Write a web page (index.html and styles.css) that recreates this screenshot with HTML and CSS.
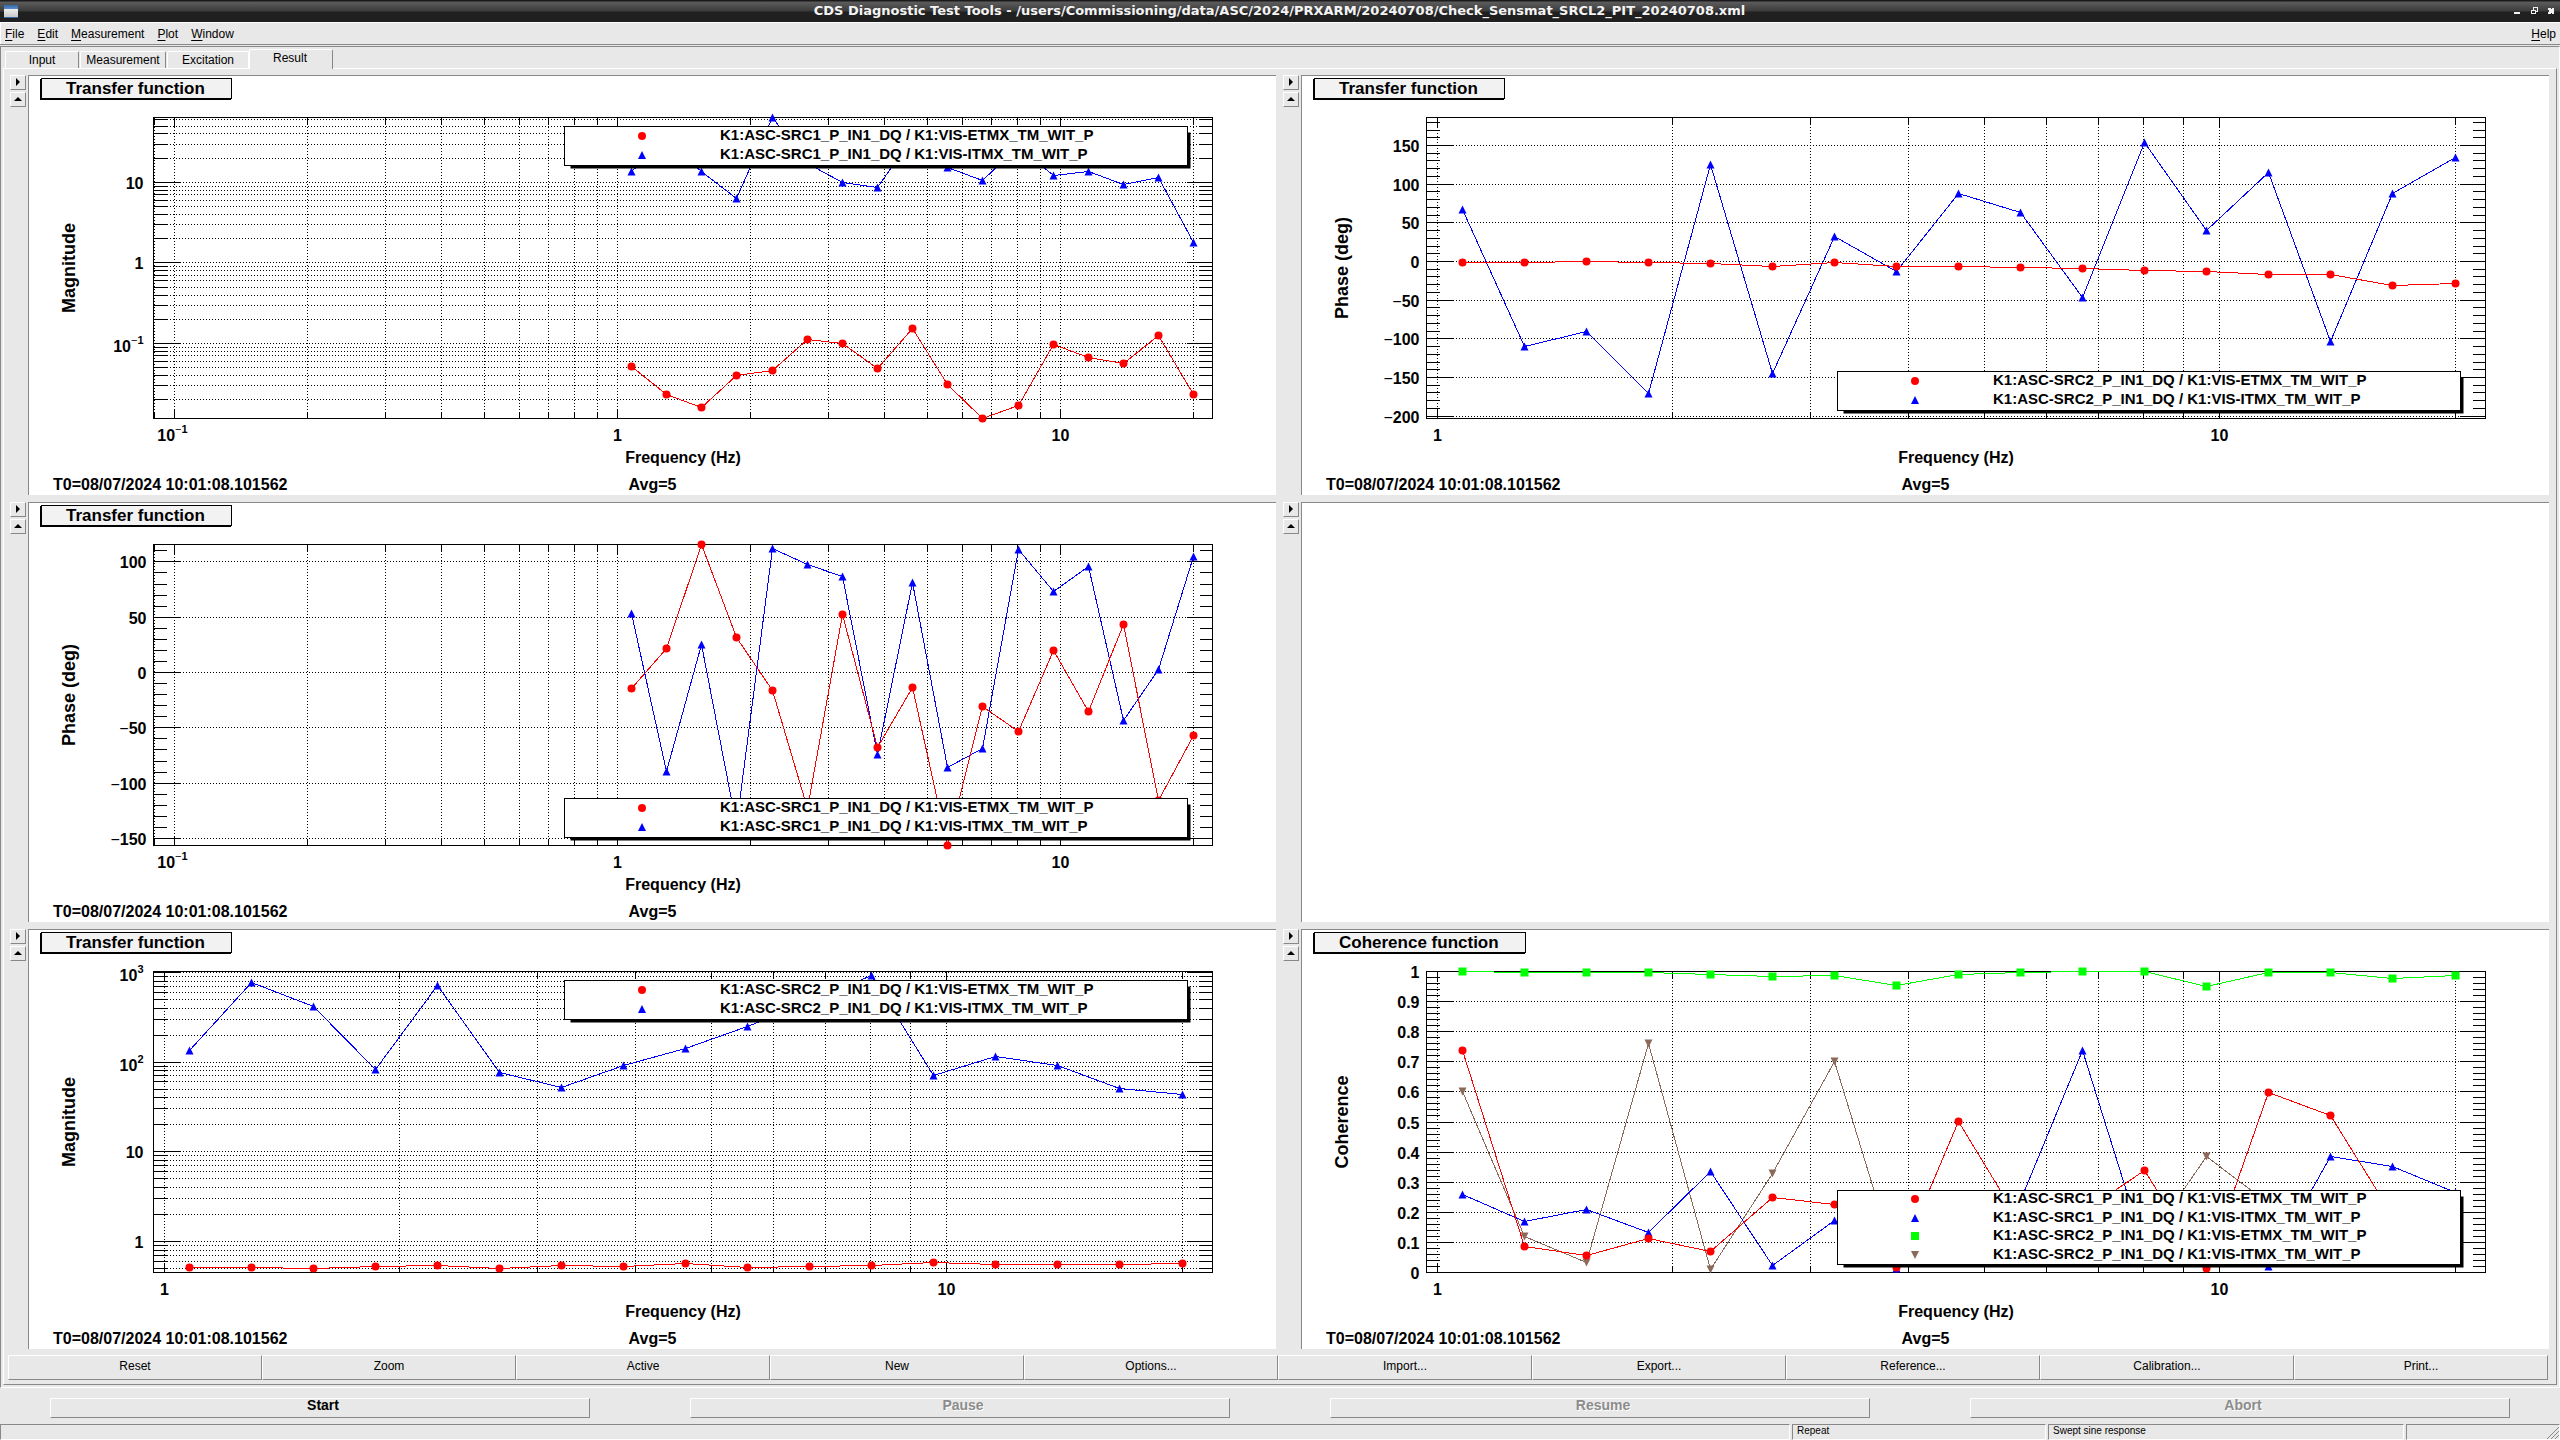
FILE: index.html
```
<!DOCTYPE html>
<html lang="en">
<head>
    <meta charset="UTF-8">
    <meta name="viewport" content="width=device-width, initial-scale=1.0">
    <title>CDS Diagnostic Test Tools</title>
    <link rel="stylesheet" href="styles.css">
</head>
<body>
    <header class="titlebar">
        <span class="app-icon"></span>
        <h1>CDS Diagnostic Test Tools - /users/Commissioning/data/ASC/2024/PRXARM/20240708/Check_Sensmat_SRCL2_PIT_20240708.xml</h1>
        <div class="window-buttons">
            <button type="button" aria-label="Minimize"><svg width="7" height="8"><rect x="0" y="5" width="6" height="2"/></svg></button>
            <button type="button" aria-label="Restore"><svg width="7" height="8"><path d="M2 0h5v5H5v2H0V3h2zM3 1v2h2v1h1V1zM1 4v2h3V4z" fill-rule="evenodd"/></svg></button>
            <button type="button" aria-label="Close"><svg width="7" height="8"><path d="M0 1h2l1 1 1-1h2v2L5 4l1 1v2H4L3 6 2 7H0V5l1-1-1-1z"/></svg></button>
        </div>
    </header>

    <nav class="menubar">
        <button type="button"><u>F</u>ile</button>
        <button type="button"><u>E</u>dit</button>
        <button type="button"><u>M</u>easurement</button>
        <button type="button"><u>P</u>lot</button>
        <button type="button"><u>W</u>indow</button>
        <button type="button" class="help"><u>H</u>elp</button>
    </nav>

    <main class="workspace">
        <div class="tabs" role="tablist">
            <button type="button" role="tab" class="tab tab-input">Input</button>
            <button type="button" role="tab" class="tab tab-measurement">Measurement</button>
            <button type="button" role="tab" class="tab tab-excitation">Excitation</button>
            <button type="button" role="tab" class="tab tab-result active" aria-selected="true">Result</button>
        </div>

        <section class="panel">
            <div class="plots" id="plots"></div>
            <div class="plot-actions">
                <button type="button">Reset</button>
                <button type="button">Zoom</button>
                <button type="button">Active</button>
                <button type="button">New</button>
                <button type="button">Options...</button>
                <button type="button">Import...</button>
                <button type="button">Export...</button>
                <button type="button">Reference...</button>
                <button type="button">Calibration...</button>
                <button type="button">Print...</button>
            </div>
        </section>
    </main>

    <div class="controls">
        <button type="button">Start</button>
        <button type="button" disabled>Pause</button>
        <button type="button" disabled>Resume</button>
        <button type="button" disabled>Abort</button>
    </div>

    <footer class="statusbar">
        <span></span>
        <span>Repeat</span>
        <span>Swept sine response</span>
        <span class="grip"><svg width="12" height="12"><path d="M0 12L12 0M4 12l8-8M8 12l4-4" stroke="#888" fill="none"/></svg></span>
    </footer>

    <script src="plots.js"></script>
</body>
</html>
```

FILE: styles.css
```
* {
    box-sizing: border-box;
}
body {
    margin: 0;
    height: 100vh;
    display: flex;
    flex-direction: column;
    overflow: hidden;
    background: #e8e8e8;
    color: #000;
    font: 12px/16px "Liberation Sans", Arial, sans-serif;
}
button {
    font: inherit;
    color: inherit;
    background: #e8e8e8;
    border: 0;
    padding: 0;
}

/* Title bar */
.titlebar {
    height: 22px;
    display: grid;
    grid-template-columns: 1fr auto 1fr;
    align-items: center;
    padding: 0 5px 0 4px;
    background: linear-gradient(#1c1a1c 0, #1c1a1c 1px, #5c5c5c 2px, #3c3c3c 11px, #202020 12px, #202020 100%);
    color: #f4f4f4;
}
.titlebar h1 {
    margin: 0;
    font: bold 13px/18px "DejaVu Sans", sans-serif;
}
.app-icon {
    width: 14px;
    height: 13px;
    background: linear-gradient(#3568a8, #5c8cc8 4px, #eee 4px, #c8c8c8);
    border-bottom: 1px solid #3a66a0;
}
.window-buttons {
    display: flex;
    justify-content: flex-end;
    gap: 10px;
}
.window-buttons button {
    background: none;
    height: 8px;
}
.window-buttons svg {
    display: block;
    fill: #f0f0f0;
    shape-rendering: crispEdges;
}

/* Menu */
.menubar {
    height: 23px;
    display: flex;
    gap: 13px;
    padding: 0 4px 0 5px;
    border-top: 1px solid #fff;
    border-bottom: 1px solid #888;
    box-shadow: inset 1px 0 #fff;
}
.menubar .help {
    margin-left: auto;
}
.menubar u {
    text-underline-offset: 2px;
}

/* Tabs and result panel */
.workspace {
    flex: 1;
    min-height: 0;
    display: flex;
    flex-direction: column;
    margin-top: 1px;
    padding: 1px 2px 2px;
    border: 1px solid #fff;
    border-top-color: #888;
    border-left-color: #888;
}
.tabs {
    display: flex;
    align-items: flex-end;
    height: 20px;
    padding-left: 2px;
}
.tab {
    height: 17px;
    line-height: 14px;
    border: 1px solid #fff;
    border-right-color: #888;
    border-bottom: 0;
    border-radius: 2px 2px 0 0;
}
.tab-input {
    width: 74px;
    margin-right: 1px;
}
.tab-measurement {
    width: 86px;
    margin-right: 1px;
}
.tab-excitation {
    width: 82px;
    border-right-color: #fff;
}
.tab-result {
    width: 84px;
}
.tab.active {
    position: relative;
    height: 20px;
    margin-bottom: -1px;
    padding: 0 2px 4px 0;
}
.panel {
    flex: 1;
    min-height: 0;
    display: flex;
    flex-direction: column;
    gap: 6px;
    padding: 6px 7px 4px 4px;
    border: 1px solid #fff;
    border-right-color: #888;
    border-bottom-color: #888;
}
.plots {
    flex: 1;
    min-height: 0;
    margin-left: 2px;
    display: grid;
    grid-template-columns: 1fr 1fr;
    grid-template-rows: repeat(3, 1fr);
    gap: 7px;
}
.cell {
    display: grid;
    grid-template-columns: 16px 1fr;
    gap: 2px;
    min-width: 0;
    min-height: 0;
}
.gutter {
    display: flex;
    flex-direction: column;
    gap: 2px;
}
.gutter button {
    height: 15px;
    padding-bottom: 1px;
    border: 1px solid #fff;
    border-right-color: #888;
    border-bottom-color: #888;
}
.gutter svg {
    display: block;
    margin: auto;
}

/* Plot pad */
.pad {
    display: flex;
    flex-direction: column;
    min-width: 0;
    min-height: 0;
    background: #fff;
    border: 1px solid #888;
    border-right: 0;
    border-bottom: 0;
}
.pad h2 {
    align-self: flex-start;
    margin: 2px 0 1px 12px;
    padding: 0 26px 0 24px;
    font-size: 17px;
    line-height: 19px;
    background: #f2f2f2;
    border: 1px solid #000;
    box-shadow: -1px 1px #000;
}
.chart {
    flex: 1;
    min-height: 0;
    width: 100%;
    display: block;
    overflow: visible;
    font-size: 16px;
    font-weight: bold;
}
.chart .axis, .chart .grid, .chart .line {
    fill: none;
    stroke: #000;
    shape-rendering: crispEdges;
}
.chart .grid {
    stroke-dasharray: 1 2;
}
.chart .y-title {
    font-size: 18px;
}
.chart .exponent {
    font-size: 11px;
}
.chart .minus {
    font-weight: normal;
}
.chart .legend-text {
    font-size: 15px;
}
.chart .legend-box {
    fill: #fff;
    stroke: #000;
}
.pad-info {
    display: grid;
    grid-template-columns: 1fr auto 1fr;
    padding: 6px 24px 1px;
    font-size: 16px;
    line-height: 18px;
    font-weight: bold;
}

/* Buttons below the plots */
.plot-actions {
    display: grid;
    grid-template-columns: repeat(10, 1fr);
    height: 25px;
    margin-right: 1px;
}
.plot-actions button {
    padding-bottom: 4px;
    border: 1px solid #fff;
    border-right-color: #888;
    border-bottom-color: #888;
}
.controls {
    display: grid;
    grid-template-columns: repeat(4, 1fr);
    gap: 100px;
    padding: 10px 50px 6px;
}
.controls button {
    height: 20px;
    padding: 0 0 6px 6px;
    font-size: 14px;
    line-height: 12px;
    font-weight: bold;
    border: 1px solid #fff;
    border-right-color: #888;
    border-bottom-color: #888;
}
.controls button:disabled {
    color: #8c8c8c;
    text-shadow: 1px 1px #fff;
}

/* Status bar */
.statusbar {
    display: grid;
    grid-template-columns: 70% 10% 14% 6%;
    height: 16px;
    font-size: 10px;
    line-height: 12px;
}
.statusbar span {
    margin-right: 2px;
    padding-left: 4px;
    border: 1px solid #888;
    border-right-color: #fff;
    border-bottom-color: #fff;
}
.statusbar .grip {
    display: flex;
    justify-content: flex-end;
    align-items: flex-end;
    margin-right: 0;
}
```

FILE: plots.js
```
const RED = '#ff0000';
const BLUE = '#0000ff';
const GREEN = '#00ff00';
const BROWN = '#8c6a5a';

// 17 swept sine points, log spaced up to 20 Hz
const FREQ_START = Math.log10(1.0758);
const FREQ_STEP = (Math.log10(20) - FREQ_START) / 16;

const WIDE = [-1.047, 1.343];
const NARROW = [-0.014, 1.34];

const plots = [
    {
        title: 'Transfer function', yTitle: 'Magnitude', x: WIDE, y: [-1.932, 1.807], log: true, legend: 'top',
        series: [
            { name: 'K1:ASC-SRC1_P_IN1_DQ / K1:VIS-ETMX_TM_WIT_P', color: RED, marker: 'circle',
              data: [0.0518, 0.0232, 0.016, 0.04, 0.0462, 0.112, 0.1, 0.0489, 0.1536, 0.0307, 0.0117, 0.017, 0.0972, 0.067, 0.0564, 0.1257, 0.0232] },
            { name: 'K1:ASC-SRC1_P_IN1_DQ / K1:VIS-ITMX_TM_WIT_P', color: BLUE, marker: 'up',
              data: [13.57, 33.6, 13.57, 6.39, 64.2, 17.2, 9.9, 8.59, 36.2, 15.2, 10.49, 27.7, 12.2, 13.57, 9.44, 11.43, 1.815] }
        ]
    },
    {
        title: 'Transfer function', yTitle: 'Phase (deg)', x: NARROW, y: [-203, 186.2], step: 50, minor: 10, legend: 'bottom',
        series: [
            { name: 'K1:ASC-SRC2_P_IN1_DQ / K1:VIS-ETMX_TM_WIT_P', color: RED, marker: 'circle',
              data: [-1, -1, 0.3, -1, -2.5, -6.5, -1, -6.5, -6.5, -7.8, -9, -11.6, -13, -16.8, -16.8, -31, -28.4] },
            { name: 'K1:ASC-SRC2_P_IN1_DQ / K1:VIS-ITMX_TM_WIT_P', color: BLUE, marker: 'up',
              data: [67, -110, -91, -171, 125, -145, 32.5, -13, 88, 63.4, -46.5, 153.4, 40, 114.7, -103.7, 88, 134.5] }
        ]
    },
    {
        title: 'Transfer function', yTitle: 'Phase (deg)', x: WIDE, y: [-156.3, 115.7], step: 50, minor: 10, legend: 'bottom',
        series: [
            { name: 'K1:ASC-SRC1_P_IN1_DQ / K1:VIS-ETMX_TM_WIT_P', color: RED, marker: 'circle',
              data: [-14.5, 21.7, 115.7, 31.6, -16.3, -123, 52.4, -67.8, -13.6, -156.3, -30.7, -53.3, 19.9, -35.2, 43.4, -116, -57] },
            { name: 'K1:ASC-SRC1_P_IN1_DQ / K1:VIS-ITMX_TM_WIT_P', color: BLUE, marker: 'up',
              data: [53, -89, 25, -138, 111.7, 97.3, 86.4, -73.8, 81, -85.5, -68.4, 111.1, 72.9, 96, -43, 2.4, 104.5] }
        ]
    },
    null,
    {
        title: 'Transfer function', yTitle: 'Magnitude', x: NARROW, y: [-0.346, 3.01], log: true, legend: 'top',
        series: [
            { name: 'K1:ASC-SRC2_P_IN1_DQ / K1:VIS-ETMX_TM_WIT_P', color: RED, marker: 'circle',
              data: [0.513, 0.513, 0.5, 0.526, 0.54, 0.5, 0.54, 0.522, 0.568, 0.513, 0.526, 0.54, 0.583, 0.554, 0.554, 0.554, 0.568] },
            { name: 'K1:ASC-SRC2_P_IN1_DQ / K1:VIS-ITMX_TM_WIT_P', color: BLUE, marker: 'up',
              data: [134.9, 773, 418, 82.8, 716, 76.7, 52.1, 91.8, 142, 250, 475, 926, 71, 115.6, 91.8, 50.4, 43.6] }
        ]
    },
    {
        title: 'Coherence function', yTitle: 'Coherence', x: NARROW, y: [0, 1], step: 0.1, minor: 0.02, legend: 'bottom',
        series: [
            { name: 'K1:ASC-SRC1_P_IN1_DQ / K1:VIS-ETMX_TM_WIT_P', color: RED, marker: 'circle',
              data: [0.7375, 0.0853, 0.0565, 0.113, 0.07, 0.249, 0.226, 0.016, 0.503, 0.163, 0.2, 0.339, 0.013, 0.598, 0.5216, 0.19, 0.15] },
            { name: 'K1:ASC-SRC1_P_IN1_DQ / K1:VIS-ITMX_TM_WIT_P', color: BLUE, marker: 'up',
              data: [0.26, 0.168, 0.208, 0.132, 0.334, 0.024, 0.172, 0.012, 0.1, 0.24, 0.7365, 0.08, 0.12, 0.021, 0.3865, 0.351, 0.265] },
            { name: 'K1:ASC-SRC2_P_IN1_DQ / K1:VIS-ETMX_TM_WIT_P', color: GREEN, marker: 'square',
              data: [1, 0.998, 0.998, 0.998, 0.991, 0.984, 0.988, 0.955, 0.991, 0.998, 1, 1, 0.951, 0.998, 0.998, 0.978, 0.988] },
            { name: 'K1:ASC-SRC2_P_IN1_DQ / K1:VIS-ITMX_TM_WIT_P', color: BROWN, marker: 'down',
              data: [0.601, 0.12, 0.033, 0.761, 0.01, 0.329, 0.7, 0.03, 0.1, 0.15, 0.12, 0.085, 0.3865, 0.23, 0.15, 0.1, 0.2] }
        ]
    }
];

function marker(type, x, y, color) {
    if (type === 'circle') return `<circle cx="${x}" cy="${y}" r="4" fill="${color}"/>`;
    if (type === 'square') return `<rect x="${x - 4}" y="${y - 4}" width="8" height="8" fill="${color}"/>`;
    if (type === 'up') return `<path d="M${x - 4} ${y + 4}h8l-4-8z" fill="${color}"/>`;
    return `<path d="M${x - 4} ${y - 4}h8l-4 8z" fill="${color}"/>`;
}

function number(value) {
    return value < 0 ? `<tspan class="minus">−</tspan>${-value}` : String(value);
}

// 1 and 10 are written out, other decades as powers of ten
function decade(n) {
    if (n === 0 || n === 1) return String(10 ** n);
    return `10<tspan class="exponent" dy="-8">${number(n)}</tspan>`;
}

// Major and minor tick positions of a log axis
function logTicks(range) {
    const ticks = [];
    for (let n = Math.floor(range[0]); n <= range[1]; n++) {
        for (let m = 1; m < 10; m++) {
            const at = n + Math.log10(m);
            if (at >= range[0] && at <= range[1]) {
                ticks.push({ at, major: m === 1, label: m === 1 ? decade(n) : '', power: m === 1 && (n < 0 || n > 1) });
            }
        }
    }
    return ticks;
}

function linearTicks(plot) {
    const ticks = [];
    const ratio = Math.round(plot.step / plot.minor);
    for (let i = Math.ceil(plot.y[0] / plot.minor); i <= Math.round(plot.y[1] / plot.minor * 100) / 100; i++) {
        const major = i % ratio === 0;
        ticks.push({ at: i * plot.minor, major, label: major ? number(Math.round(i * plot.minor * 100) / 100) : '' });
    }
    return ticks;
}

function draw(svg, plot) {
    const width = svg.clientWidth;
    const height = svg.clientHeight;
    const left = Math.round(width * 0.1) - 0.5;
    const right = Math.floor(width * 0.95) - 0.5;
    const top = 17.5;
    const bottom = height - 51.5;
    const px = v => left + (v - plot.x[0]) / (plot.x[1] - plot.x[0]) * (right - left);
    const py = v => bottom - (v - plot.y[0]) / (plot.y[1] - plot.y[0]) * (bottom - top);
    const snap = v => Math.floor(v) + 0.5;

    let grid = '';
    let axis = `M${left} ${top}H${right}V${bottom}H${left}Z`;
    let labels = '';

    // Grid lines start on a whole pixel so that every dot is solid
    logTicks(plot.x).forEach(t => {
        const x = snap(px(t.at));
        const size = t.major ? 10 : 6;
        grid += `M${x} ${top + 0.5}V${bottom}`;
        axis += `M${x} ${top}v${size}M${x} ${bottom}v${-size}`;
        if (t.label) labels += `<text x="${t.power ? x - 2 : x}" y="${bottom + 22}" text-anchor="middle">${t.label}</text>`;
    });

    (plot.log ? logTicks(plot.y) : linearTicks(plot)).forEach(t => {
        const y = snap(py(t.at));
        const size = t.major ? 26 : 13;
        if (t.major || plot.log) grid += `M${left + size + 0.5} ${y}H${right - size}`;
        axis += `M${left} ${y}h${size}M${right} ${y}h${-size}`;
        if (t.label) labels += `<text x="${left - (plot.log ? 10 : 7)}" y="${y + (t.power ? 8 : 6)}" text-anchor="end">${t.label}</text>`;
    });

    // First series ends up on top
    let curves = '';
    [...plot.series].reverse().forEach(s => {
        const points = s.data.map((v, i) => [
            snap(px(FREQ_START + i * FREQ_STEP)),
            snap(py(plot.log ? Math.log10(v) : v))
        ]);
        curves += `<polyline class="line" style="stroke:${s.color}" points="${points.join(' ')}"/>`;
        curves += points.map(p => marker(s.marker, p[0], p[1], s.color)).join('');
    });

    const boxWidth = Math.floor(width * 0.5);
    const boxHeight = plot.series.length > 2 ? 74 : 39;
    const boxX = Math.round(width * 0.43) - 0.5;
    const boxY = plot.legend === 'top' ? top + 9 : bottom - 8 - boxHeight;
    const row = boxHeight / plot.series.length;
    let legend = `<rect x="${boxX + 6}" y="${boxY + 6}" width="${boxWidth - 3}" height="${boxHeight - 3}"/>`;
    legend += `<rect class="legend-box" x="${boxX}" y="${boxY}" width="${boxWidth}" height="${boxHeight}"/>`;
    plot.series.forEach((s, i) => {
        const y = Math.floor(boxY + row * (i + 0.5));
        legend += marker(s.marker, Math.round(boxX + boxWidth / 8), y, s.color);
        legend += `<text class="legend-text" x="${Math.round(boxX + boxWidth / 4)}" y="${y + 4}">${s.name}</text>`;
    });

    const middle = (top + bottom) / 2;
    svg.innerHTML = `
        <path class="grid" d="${grid}"/>
        <path class="axis" d="${axis}"/>
        ${labels}
        <text x="${(left + right) / 2}" y="${bottom + 44}" text-anchor="middle">Frequency (Hz)</text>
        <text class="y-title" transform="translate(46 ${middle}) rotate(-90)" text-anchor="middle">${plot.yTitle}</text>
        ${curves}
        ${legend}`;
}

document.getElementById('plots').innerHTML = plots.map(plot => `
    <div class="cell">
        <div class="gutter">
            <button type="button" aria-label="Show options"><svg width="6" height="8"><path d="M1 0l4 4-4 4z"/></svg></button>
            <button type="button" aria-label="Enlarge"><svg width="8" height="6"><path d="M0 5l4-4 4 4z"/></svg></button>
        </div>
        <div class="pad">${plot ? `
            <h2>${plot.title}</h2>
            <svg class="chart"></svg>
            <div class="pad-info"><span>T0=08/07/2024 10:01:08.101562</span><span>Avg=5</span></div>` : ''}
        </div>
    </div>`).join('');

function drawAll() {
    const charts = document.querySelectorAll('.chart');
    plots.filter(Boolean).forEach((plot, i) => draw(charts[i], plot));
}

drawAll();
window.addEventListener('resize', drawAll);
```
